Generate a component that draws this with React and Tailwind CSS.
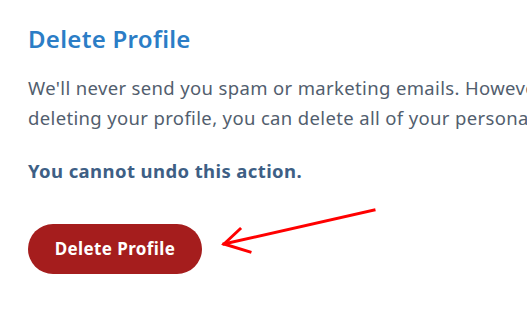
export default function App() {
  return (
    <div
      className="relative h-[310px] w-[527px] overflow-hidden bg-white pl-[28px] pt-[23px]"
      style={{ fontFamily: '"Noto Sans", Lato, sans-serif' }}
    >
      <h2 className="text-[24px] font-semibold leading-[32px] tracking-[0.3px] text-[#2b7dc6]">
        Delete Profile
      </h2>

      <p className="mt-[18px] whitespace-nowrap text-[18.5px] leading-[30px] tracking-[0.35px] text-[#525e6e]">
        <span className="block">We'll never send you spam or marketing emails. However, if you</span>
        <span className="block">deleting your profile, you can delete all of your personal data.</span>
      </p>

      <p className="mt-[25px] text-[18.5px] font-bold leading-[26px] tracking-[0.4px] text-[#3e5f85]">
        You cannot undo this action.
      </p>

      <button className="mt-[40px] h-[50px] w-[174px] rounded-full bg-[#a51d1d] text-[17px] font-bold tracking-[0.4px] text-white">
        Delete Profile
      </button>

      <svg
        className="absolute left-0 top-0"
        width="527"
        height="310"
        viewBox="0 0 527 310"
        fill="none"
        stroke="#ff0000"
        strokeWidth="3"
        strokeLinecap="square"
      >
        <path d="M374 210 L224 244" />
        <path d="M240 229 L224 244 L250 252" />
      </svg>
    </div>
  )
}
